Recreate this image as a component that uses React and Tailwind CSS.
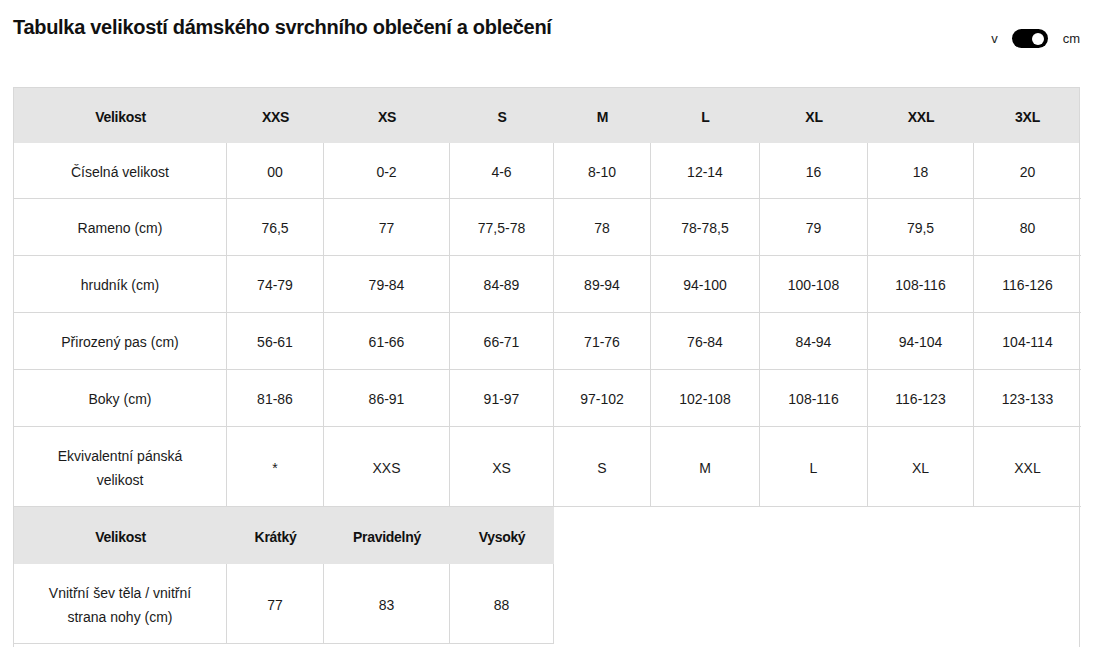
import React from "react";

const cols = "grid-cols-[213px_97px_126px_104px_97px_109px_108px_106px_107px]";
const cols4 = "grid-cols-[213px_97px_126px_104px]";

const head = ["Velikost", "XXS", "XS", "S", "M", "L", "XL", "XXL", "3XL"];
const rows = [
  { h: "h-[56px]", cells: ["Číselná velikost", "00", "0-2", "4-6", "8-10", "12-14", "16", "18", "20"] },
  { h: "h-[57px]", cells: ["Rameno (cm)", "76,5", "77", "77,5-78", "78", "78-78,5", "79", "79,5", "80"] },
  { h: "h-[57px]", cells: ["hrudník (cm)", "74-79", "79-84", "84-89", "89-94", "94-100", "100-108", "108-116", "116-126"] },
  { h: "h-[57px]", cells: ["Přirozený pas (cm)", "56-61", "61-66", "66-71", "71-76", "76-84", "84-94", "94-104", "104-114"] },
  { h: "h-[57px]", cells: ["Boky (cm)", "81-86", "86-91", "91-97", "97-102", "102-108", "108-116", "116-123", "123-133"] },
  { h: "h-[80px]", cells: [["Ekvivalentní pánská", "velikost"], "*", "XXS", "XS", "S", "M", "L", "XL", "XXL"] },
];

function Cell({ children, last, h }) {
  const content = Array.isArray(children) ? (
    <span className="block leading-[24px]">
      {children[0]}
      <br />
      {children[1]}
    </span>
  ) : (
    children
  );
  return (
    <div
      className={`${h} pt-[3px] flex items-center justify-center text-center border-b border-[#d8d8d8] ${last ? "" : "border-r"} text-[14px] text-[#1a1a1a]`}
    >
      {content}
    </div>
  );
}

export default function App() {
  return (
    <div
      className="w-[1117px] h-[647px] overflow-hidden bg-white pl-[13px] pr-[37px]"
      style={{ fontFamily: '"Liberation Sans", Arial, sans-serif' }}
    >
      <div className="flex justify-between items-start h-[87px]">
        <h1 className="mt-[14px] text-[20px] font-bold text-[#111] tracking-[-0.3px] leading-[26px]">
          Tabulka velikostí dámského svrchního oblečení a oblečení
        </h1>
        <div className="mt-[29px] flex items-center text-[13px] text-[#222]">
          <span className="mr-[14px]">v</span>
          <span className="w-[36px] h-[19px] rounded-full bg-black flex items-center justify-end pr-[4px]">
            <span className="w-[12px] h-[12px] rounded-full bg-white" />
          </span>
          <span className="ml-[15px]">cm</span>
        </div>
      </div>

      <div className="border-l border-r border-t border-[#d8d8d8] h-[600px]">
        <div className={`grid ${cols} h-[55px] bg-[#e5e5e5]`}>
          {head.map((t) => (
            <div key={t} className="pt-[3px] flex items-center justify-center text-[14px] font-bold text-[#111] tracking-[-0.3px]">
              {t}
            </div>
          ))}
        </div>
        {rows.map((r, i) => (
          <div key={i} className={`grid ${cols}`}>
            {r.cells.map((c, j) => (
              <Cell key={j} h={r.h} last={j === 8}>
                {c}
              </Cell>
            ))}
          </div>
        ))}
        <div className={`grid ${cols4} w-[540px] h-[57px] bg-[#e5e5e5]`}>
          {["Velikost", "Krátký", "Pravidelný", "Vysoký"].map((t) => (
            <div key={t} className="pt-[3px] flex items-center justify-center text-[14px] font-bold text-[#111] tracking-[-0.3px]">
              {t}
            </div>
          ))}
        </div>
        <div className={`grid ${cols4} w-[541px]`}>
          <Cell h="h-[80px]">{["Vnitřní šev těla / vnitřní", "strana nohy (cm)"]}</Cell>
          <Cell h="h-[80px]">77</Cell>
          <Cell h="h-[80px]">83</Cell>
          <Cell h="h-[80px]">88</Cell>
        </div>
      </div>
    </div>
  );
}
